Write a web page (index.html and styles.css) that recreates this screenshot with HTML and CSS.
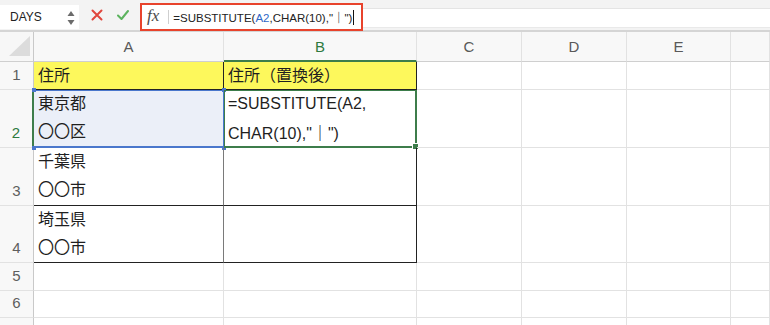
FILE: index.html
```html
<!DOCTYPE html>
<html lang="ja">
<head>
  <meta charset="UTF-8">
  <title>SUBSTITUTE sheet</title>
  <link rel="stylesheet" href="styles.css">
</head>
<body>
  <div class="toolbar">
    <div class="name-box">
      <span>DAYS</span>
      <svg class="spin" width="8" height="16" viewBox="0 0 8 16">
        <path d="M4 1 L7.5 6 L0.5 6 Z" fill="#6b6b6b"/>
        <path d="M4 15 L7.5 10 L0.5 10 Z" fill="#6b6b6b"/>
      </svg>
    </div>
    <div class="edit-btns">
      <svg width="12" height="12" viewBox="0 0 12 12">
        <path d="M1.5 1.5 L10.5 10.5 M10.5 1.5 L1.5 10.5" stroke="#e0463c" stroke-width="2" stroke-linecap="round"/>
      </svg>
      <svg width="12" height="12" viewBox="0 0 12 12">
        <path d="M1 6.5 L4.5 10 L11 2" stroke="#5cb35e" stroke-width="2" fill="none" stroke-linecap="round" stroke-linejoin="round"/>
      </svg>
    </div>
    <div class="fx-box">
      <span class="fx">fx</span>
      <span class="fx-sep"></span>
      <span class="formula">=SUBSTITUTE(<span class="ref">A2</span>,CHAR(10),"<span class="bar">｜</span>")</span><span class="caret"></span>
    </div>
    <div class="formula-rest"></div>
  </div>

  <div class="sheet">
    <!-- header row -->
    <div class="corner">
      <svg width="24" height="22" viewBox="0 0 24 22"><path d="M23 1 L23 21 L2 21 Z" fill="#dcdcdc"/></svg>
    </div>
    <div class="col-head">A</div>
    <div class="col-head active">B</div>
    <div class="col-head">C</div>
    <div class="col-head">D</div>
    <div class="col-head">E</div>
    <div class="col-head"></div>

    <!-- row 1 -->
    <div class="row-head">1</div>
    <div class="cell yellow tbl">住所</div>
    <div class="cell yellow tbl tbl-b">住所（置換後）</div>
    <div class="cell"></div>
    <div class="cell"></div>
    <div class="cell"></div>
    <div class="cell"></div>

    <!-- row 2 -->
    <div class="row-head active">2</div>
    <div class="cell tall sel-range">東京都<br>〇〇区
      <span class="handle tl"></span><span class="handle tr"></span>
      <span class="handle bl"></span><span class="handle br"></span>
    </div>
    <div class="cell tall active-cell">=SUBSTITUTE(A2,<br>CHAR(10),"<span class="bar">｜</span>")
      <span class="fill-handle"></span>
    </div>
    <div class="cell"></div>
    <div class="cell"></div>
    <div class="cell"></div>
    <div class="cell"></div>

    <!-- row 3 -->
    <div class="row-head">3</div>
    <div class="cell tall tbl tbl-a">千葉県<br>〇〇市</div>
    <div class="cell tall tbl tbl-b"></div>
    <div class="cell"></div>
    <div class="cell"></div>
    <div class="cell"></div>
    <div class="cell"></div>

    <!-- row 4 -->
    <div class="row-head">4</div>
    <div class="cell tall tbl tbl-a">埼玉県<br>〇〇市</div>
    <div class="cell tall tbl tbl-b"></div>
    <div class="cell"></div>
    <div class="cell"></div>
    <div class="cell"></div>
    <div class="cell"></div>

    <!-- rows 5-7 -->
    <div class="row-head">5</div>
    <div class="cell"></div><div class="cell"></div><div class="cell"></div>
    <div class="cell"></div><div class="cell"></div><div class="cell"></div>
    <div class="row-head">6</div>
    <div class="cell"></div><div class="cell"></div><div class="cell"></div>
    <div class="cell"></div><div class="cell"></div><div class="cell"></div>
    <div class="row-head"></div>
    <div class="cell"></div><div class="cell"></div><div class="cell"></div>
    <div class="cell"></div><div class="cell"></div><div class="cell"></div>
  </div>
</body>
</html>
```

FILE: styles.css
```css
body {
  margin: 0;
  width: 770px;
  height: 325px;
  overflow: hidden;
  background: #fff;
  font-family: "Liberation Sans", "Noto Sans CJK JP", sans-serif;
  color: #1f1f1f;
}

/* Formula bar */
.toolbar {
  display: flex;
  align-items: flex-start;
  height: 30px;
  background: #f3f3f3;
  border-bottom: 2px solid #d5d5d5;
}
.name-box {
  box-sizing: border-box;
  width: 79px;
  height: 24px;
  margin-top: 5px;
  padding: 0 4px 0 10px;
  background: #fff;
  display: flex;
  align-items: center;
  justify-content: space-between;
  font-size: 12px;
  color: #222;
}
.spin { margin-top: 1px; }
.edit-btns {
  width: 61px;
  height: 36px;
  display: flex;
  align-items: center;
  gap: 14px;
  padding-left: 12px;
  box-sizing: border-box;
  margin-top: -3px;
}
.fx-box {
  box-sizing: border-box;
  width: 223px;
  height: 28px;
  margin-top: 3px;
  border: 2px solid #e8432c;
  background: #fff;
  display: flex;
  align-items: center;
  padding-left: 5px;
}
.fx {
  font-family: "Liberation Serif", serif;
  font-style: italic;
  font-size: 17px;
  color: #4a4a4a;
  margin-top: -2px;
}
.fx-sep {
  width: 1px;
  height: 14px;
  background: #cfcfcf;
  margin: 0 4px 0 9px;
}
.formula {
  font-size: 11.5px;
  color: #222;
  white-space: nowrap;
}
.formula .ref { color: #2f68c7; }
.bar {
  font-family: "Noto Sans CJK JP", sans-serif;
  font-weight: 700;
  color: #222;
}
.caret {
  width: 1px;
  height: 15px;
  background: #111;
  margin-left: 1px;
}
.formula-rest {
  flex: 1;
  height: 18px;
  margin-top: 8px;
  background: #fff;
  border-top: 1px solid #e4e4e4;
  border-bottom: 1px solid #e9e9e9;
}

/* Sheet grid */
.sheet {
  display: grid;
  grid-template-columns: 34px 190px 193px 105px 105px 104px 1fr;
  grid-template-rows: 30px 28px 58px 58px 57px 28px 27px 20px;
}
.sheet > div {
  box-sizing: border-box;
  border-right: 1px solid #e2e2e2;
  border-bottom: 1px solid #e2e2e2;
}
.corner {
  background: #f7f7f7;
  display: flex;
  align-items: flex-end;
  justify-content: flex-end;
  padding: 0 2px 4px 0;
}
.sheet > .corner,
.sheet > .col-head { border-bottom: 1px solid #cfcfcf; }
.col-head {
  background: #f8f8f8;
  font-size: 15px;
  color: #595959;
  display: flex;
  align-items: center;
  justify-content: center;
}
.sheet > .col-head.active {
  color: #2e7a3f;
  border-bottom: 2px solid #3d7d4b;
}
.sheet > .row-head,
.sheet > .corner { border-right: 1px solid #c9c9c9; }
.row-head {
  background: #f8f8f8;
  font-size: 15px;
  color: #5e5e5e;
  display: flex;
  align-items: flex-end;
  justify-content: center;
  line-height: 28px;
}
.sheet > .row-head.active {
  color: #2e7a3f;
  border-right: 2px solid #3d7d4b;
}

.cell {
  position: relative;
  font-size: 16px;
  line-height: 28px;
  padding-left: 4px;
  white-space: nowrap;
}
.yellow { background: #fdf85c; }
.sheet > .tbl { border-right-color: #222; border-bottom-color: #222; }
.sheet > .tbl-a { border-right-color: #7a7a7a; }

/* Selected range A2 */
.sel-range {
  background: #ebeff8;
  box-shadow: inset 0 1px 0 #4a77cc, inset 0 -1px 0 #4a77cc;
}
.sheet > .sel-range { border-bottom: 1px solid #4a77cc; border-right: 1px solid #4a77cc; }
.handle {
  position: absolute;
  width: 4px;
  height: 4px;
  background: #4a77cc;
}
.handle.tl { left: -2px; top: -2px; }
.handle.tr { right: -3px; top: -2px; }
.handle.bl { left: -2px; bottom: -3px; }
.handle.br { right: -3px; bottom: -3px; }

/* Active cell B2 */
.active-cell {
  box-shadow: inset 0 0 0 1px #3d7d4b;
}
.sheet > .active-cell { border-right: 1px solid #3d7d4b; border-bottom: 1px solid #3d7d4b; }
.fill-handle {
  position: absolute;
  right: -3px;
  bottom: -3px;
  width: 5px;
  height: 5px;
  background: #3d7d4b;
  border: 1px solid #fff;
}
```
